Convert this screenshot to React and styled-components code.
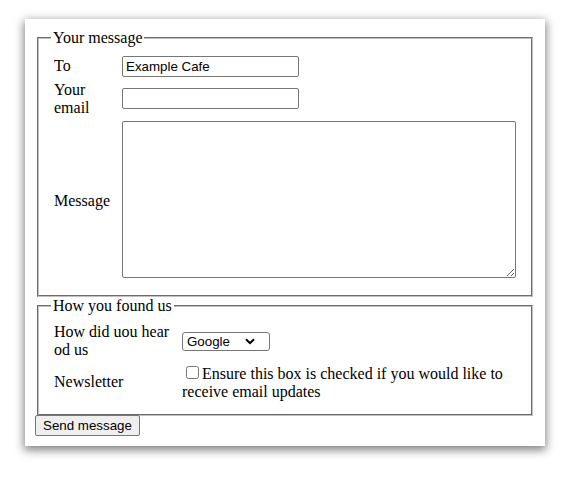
import React from 'react';
import styled, { createGlobalStyle } from 'styled-components';

const GlobalStyle = createGlobalStyle`
    html, body {
        margin: 0;
        padding: 0;
        background: #ffffff;
    }
    body {
        font-family: "Liberation Serif", "Times New Roman", serif;
        font-size: 16px;
        color: #000000;
    }
`

const Page = styled.div`
    min-height: 489px;
    box-sizing: border-box;
    padding: 19px 0 0 25px;
`

const Card = styled.form`
    width: 520px;
    box-sizing: border-box;
    margin: 0;
    padding: 10px;
    background: #ffffff;
    box-shadow: 0 3px 9px 1px rgba(0, 0, 0, 0.5);
`

const Fieldset = styled.fieldset`
    margin: 0 2px;
    padding: 5.6px 12px 10px;
    border: 2px groove rgb(192, 192, 192);
    min-width: 0;
`

const Legend = styled.legend`
    padding: 0 2px;
`

const Rows = styled.div`
    display: grid;
    grid-template-columns: ${({ $label }) => $label}px 1fr;
    column-gap: 4px;
    row-gap: 4px;
    padding: 3px;
    align-items: center;
`

const Label = styled.label`
    display: block;
`

const Cell = styled.div`
    min-width: 0;
`

const TextInput = styled.input`
    box-sizing: border-box;
    width: 177px;
    height: 21px;
    margin: 0;
    padding: 1px 3px;
    border: 1px solid #767676;
    border-radius: 2px;
    font-family: "Liberation Sans", Arial, sans-serif;
    font-size: 13.333px;
    color: #000000;
    vertical-align: baseline;
`

const TextArea = styled.textarea`
    box-sizing: border-box;
    width: 100%;
    height: 157px;
    margin: 0;
    padding: 2px;
    border: 1px solid #767676;
    border-radius: 2px;
    font-family: "Liberation Mono", monospace;
    font-size: 13.333px;
    vertical-align: baseline;
`

const SelectWrap = styled.span`
    position: relative;
    display: inline-block;
    vertical-align: middle;
`

const Select = styled.select`
    display: block;
    box-sizing: border-box;
    width: 88px;
    height: 19px;
    margin: 0;
    padding: 0 0 0 4px;
    appearance: none;
    -webkit-appearance: none;
    background: #ffffff;
    border: 1px solid #767676;
    border-radius: 3px;
    font-family: "Liberation Sans", Arial, sans-serif;
    font-size: 13.333px;
    color: #000000;
`

const Chevron = styled.svg`
    position: absolute;
    right: 15px;
    top: 6px;
    pointer-events: none;
`

const Check = styled.input`
    width: 13px;
    height: 13px;
    margin: 3px 3px 3px 4px;
`

const SendButton = styled.button`
    display: block;
    height: 21px;
    margin: -1px 0 0;
    padding: 1px 7px;
    border: 1px solid #767676;
    border-radius: 2px;
    background: #efefef;
    font-family: "Liberation Sans", Arial, sans-serif;
    font-size: 13.333px;
    color: #000000;
`

export default function App() {
    return (
        <Page>
            <GlobalStyle />
            <Card onSubmit={(e) => e.preventDefault()}>
                <Fieldset>
                    <Legend>Your message</Legend>
                    <Rows $label={64}>
                        <Label htmlFor="to">To</Label>
                        <Cell><TextInput id="to" type="text" defaultValue="Example Cafe" /></Cell>
                        <Label htmlFor="email">Your email</Label>
                        <Cell><TextInput id="email" type="email" /></Cell>
                        <Label htmlFor="msg">Message</Label>
                        <Cell><TextArea id="msg" /></Cell>
                    </Rows>
                </Fieldset>
                <Fieldset>
                    <Legend>How you found us</Legend>
                    <Rows $label={124}>
                        <Label htmlFor="hear">How did uou hear od us</Label>
                        <Cell>
                            <SelectWrap>
                                <Select id="hear" defaultValue="google">
                                    <option value="google">Google</option>
                                    <option value="friend">A friend</option>
                                    <option value="other">Other</option>
                                </Select>
                                <Chevron width="10" height="7" viewBox="0 0 10 7">
                                    <polyline points="1,1.2 5,5.2 9,1.2" fill="none" stroke="#000" strokeWidth="2" />
                                </Chevron>
                            </SelectWrap>
                        </Cell>
                        <Label htmlFor="news">Newsletter</Label>
                        <Cell>
                            <Check id="news" type="checkbox" />Ensure this box is checked if you would like to receive email updates
                        </Cell>
                    </Rows>
                </Fieldset>
                <SendButton type="submit">Send message</SendButton>
            </Card>
        </Page>
    );
}
